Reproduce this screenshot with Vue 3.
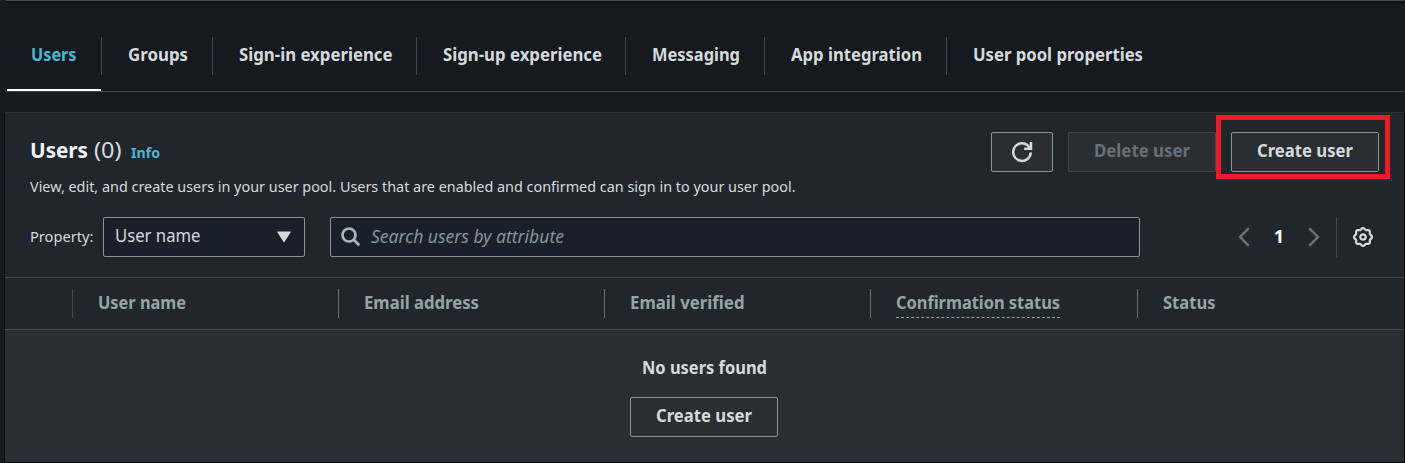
<script setup>
const tabs = [
  { label: 'Users', cell: 95, width: 45.5 },
  { label: 'Groups', cell: 111, width: 60 },
  { label: 'Sign-in experience', cell: 204, width: 153.5 },
  { label: 'Sign-up experience', cell: 209, width: 159 },
  { label: 'Messaging', cell: 139, width: 88 },
  { label: 'App integration', cell: 182, width: 131 },
  { label: 'User pool properties', cell: 220, width: 170 },
]

const columns = [
  { label: 'User name', width: 88 },
  { label: 'Email address', width: 115 },
  { label: 'Email verified', width: 114.5 },
  { label: 'Confirmation status', width: 164, hint: true },
  { label: 'Status', width: 52.5 },
]

// Scalloped outline of the settings gear: eight rounded teeth around a ring.
const gear = (() => {
  const pts = []
  for (let i = 0; i < 96; i++) {
    const a = (i / 96) * Math.PI * 2
    const r = 8.25 + 0.8 * Math.cos(8 * a)
    pts.push(`${(10 + r * Math.cos(a)).toFixed(2)} ${(10 + r * Math.sin(a)).toFixed(2)}`)
  }
  return `M${pts.join('L')}Z`
})()

// Condenses a label horizontally so that it occupies the given width.
const vFit = {
  mounted(el, { value }) {
    const natural = el.getBoundingClientRect().width
    el.style.transform = `scaleX(${value / natural})`
    el.style.marginRight = `${value - natural}px`
  },
}
</script>

<template>
  <div class="page">
    <nav class="tabs">
      <a v-for="(t, i) in tabs" :key="t.label" class="tab" :class="{ active: i === 0 }" :style="{ width: t.cell + 'px' }">
        <span v-fit="t.width" class="fit">{{ t.label }}</span>
      </a>
    </nav>

    <section class="panel">
      <header class="head">
        <div class="titles">
          <div class="title-row">
            <h2><span v-fit="58" class="fit">Users</span></h2>
            <span class="count"><span v-fit="27.5" class="fit">(0)</span></span>
            <a class="info"><span v-fit="29" class="fit">Info</span></a>
          </div>
          <p class="desc"><span v-fit="765.5" class="fit">View, edit, and create users in your user pool. Users that are enabled and confirmed can sign in to your user pool.</span></p>
        </div>
        <div class="actions">
          <button class="btn icon-btn" aria-label="Refresh">
            <svg width="22" height="22" viewBox="0 0 22 22" fill="none" stroke="currentColor" stroke-width="2.5">
              <path d="M19.800 11.500a8.800 8.800 0 1 1-3.400-7.400L19.200 7" />
              <path d="M20 1v6.800h-6.800" />
            </svg>
          </button>
          <button class="btn disabled" disabled><span v-fit="96" class="fit">Delete user</span></button>
          <div class="primary">
            <button class="btn"><span v-fit="96" class="fit">Create user</span></button>
            <div class="highlight"></div>
          </div>
        </div>
      </header>

      <div class="filters">
        <label class="prop"><span v-fit="63.5" class="fit">Property:</span></label>
        <div class="select">
          <span v-fit="85.5" class="fit">User name</span>
          <svg width="14" height="12" viewBox="0 0 14 12"><path d="M1 .5h12a.6.6 0 0 1 .5 1L7.6 10.8a.7.7 0 0 1-1.2 0L.5 1.5A.6.6 0 0 1 1 .5z" fill="currentColor" /></svg>
        </div>
        <div class="search">
          <svg width="20" height="20" viewBox="0 0 20 20" fill="none" stroke="currentColor" stroke-width="2.7">
            <circle cx="8" cy="8" r="6.500" /><path d="M12.600 12.600l5.700 5.700" />
          </svg>
          <span v-fit="193" class="fit">Search users by attribute</span>
        </div>
        <div class="pager">
          <svg width="12" height="20" viewBox="0 0 12 20" fill="none" stroke="currentColor" stroke-width="2.500"><path d="M10.800 1.200L2 10l8.800 8.800" /></svg>
          <b>1</b>
          <svg width="12" height="20" viewBox="0 0 12 20" fill="none" stroke="currentColor" stroke-width="2.500"><path d="M1.200 1.200L10 10l-8.800 8.800" /></svg>
        </div>
        <div class="prefs">
          <svg width="20" height="20" viewBox="0 0 20 20" fill="none" stroke="currentColor" stroke-width="2.200" stroke-linejoin="round">
            <path :d="gear" />
            <circle cx="10" cy="10" r="2.700" />
          </svg>
        </div>
      </div>

      <div class="thead">
        <div v-for="c in columns" :key="c.label" class="th">
          <span :class="{ hint: c.hint }"><span v-fit="c.width" class="fit">{{ c.label }}</span></span>
        </div>
      </div>

      <div class="empty">
        <strong><span v-fit="125" class="fit">No users found</span></strong>
        <button class="btn"><span v-fit="96" class="fit">Create user</span></button>
      </div>
    </section>
  </div>
</template>

<style>
body { background: #16191f; overflow: hidden; }
</style>

<style scoped>
* { box-sizing: border-box; }
.page {
  width: 1405px; height: 463px; padding: 0 1px 0 5px; overflow: hidden;
  background: #16191f; color: #d5dbdb;
  font: 18px/24px "Noto Sans", "Open Sans", sans-serif;
}
.fit { display: inline-block; white-space: nowrap; transform-origin: 0 50%; }
.tabs {
  display: flex; height: 92px; padding: 37px 0 0 2px;
  border-top: 1px solid #414d55; border-bottom: 1px solid #414750;
  box-shadow: inset 0 2px 0 #0c0e10;
}
.tab {
  position: relative; flex: none; height: 38px; margin-top: -1px; padding: 5px 0 0 25.500px;
  border-right: 1px solid #414750; font-weight: 700;
}
.tab:first-child { padding-left: 23.500px; color: #44b9d6; }
.tab:last-child { border-right: 0; }
.tab.active::after {
  content: ""; position: absolute; left: 0; right: 0; bottom: -16px; height: 2px; background: #fff;
}
.panel {
  margin-top: 20px; height: 350px; background: #21252c;
  border-top: 1px solid #2b2f33; box-shadow: 1px 1px 0 #08090b, -1px 1px 0 #0e1013;
}
.head { display: flex; justify-content: space-between; padding: 19px 25px 0 25px; height: 104px; }
.title-row { display: flex; height: 36px; align-items: flex-start; line-height: 34px; }
h2 { margin: 0; font-size: 22px; line-height: 34px; color: #f2f3f3; }
.count { margin-left: 6px; font-size: 22px; }
.info { margin-left: 9px; font-size: 15px; font-weight: 700; line-height: 41px; color: #44b9d6; }
.desc { margin: 6px 0 0; font-size: 15px; line-height: 24px; }
.actions { display: flex; gap: 15px; }
.btn {
  display: flex; justify-content: center; align-items: center; flex: none;
  width: 148px; height: 40px; padding: 0 0 4px;
  border: 1px solid #879596; border-radius: 2px; background: #2a2e33; color: #d5dbdb;
  font: 700 18px/24px "Noto Sans", "Open Sans", sans-serif;
}
.icon-btn { width: 62px; padding: 0; }
.disabled { border-color: #414750; color: #687078; }
.primary { position: relative; }
.highlight {
  position: absolute; left: -15px; top: -17px; width: 174px; height: 64px; border: 5px solid #ed1c24;
}
.filters { display: flex; align-items: center; height: 40px; padding-left: 25px; }
.prop { width: 73px; font-size: 15px; line-height: 24px; padding-bottom: 2px; }
.select, .search {
  display: flex; align-items: center; height: 40px; border: 1px solid #879596; border-radius: 2px; background: #1a2029;
}
.select { width: 202px; justify-content: space-between; padding: 0 13px 0 10.500px; }
.select .fit { padding-bottom: 4px; }
.search { width: 810px; margin-left: 25px; padding-left: 10px; gap: 10px; color: #879596; font-style: italic; }
.search svg { color: #aab7b8; }
.search .fit { padding-bottom: 2px; }
.pager { display: flex; align-items: center; width: 196px; height: 40px; padding-left: 98px; color: #687078; }
.pager b { width: 58px; padding-bottom: 3px; text-align: center; color: #fff; }
.prefs { display: flex; align-items: center; height: 40px; padding-left: 16px; border-left: 1px solid #414750; }
.thead {
  display: grid; grid-template-columns: 266px 266px 266px 267px 1fr; align-items: center;
  height: 53px; margin-top: 20px; padding-left: 67px;
  border-top: 1px solid #414750; border-bottom: 1px solid #414d55;
  color: #95a5a6; font-weight: 700;
}
.th { height: 29px; padding: 1px 0 0 25px; border-left: 1px solid #687078; }
.th:first-child { border-color: #414750; }
.hint { display: inline-block; height: 28px; margin-top: -1px; border-bottom: 1px dashed #95a5a6; }
.empty {
  display: flex; flex-direction: column; align-items: center; gap: 18px;
  height: 132px; padding: 25px 1px 0 0; background: #2a2e33;
}
</style>
